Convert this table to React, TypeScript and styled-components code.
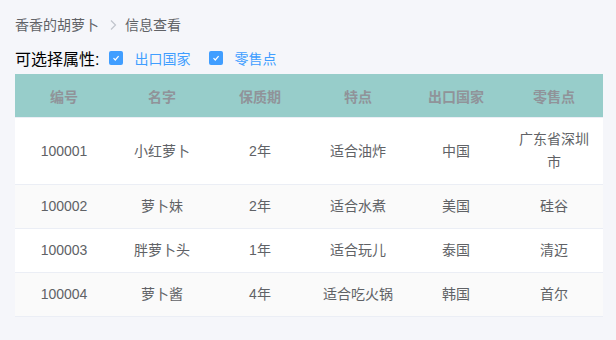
import { createGlobalStyle } from 'styled-components';
import styled from 'styled-components';

const GlobalStyle = createGlobalStyle`
  html, body {
    margin: 0;
    padding: 0;
    background: #f5f6fa;
    font-family: "Liberation Sans", "Noto Sans CJK SC", sans-serif;
  }
`;

const Page = styled.div`
  padding: 18px 13px 0 15px;
`;

const Breadcrumb = styled.div`
  display: flex;
  align-items: center;
  font-size: 14px;
  line-height: 14px;
  color: #606266;
`;

const Sep = styled.span`
  display: inline-flex;
  margin: 0 7px 0 9px;
  color: #c0c4cc;
`;

const FilterBar = styled.div`
  display: flex;
  align-items: center;
  height: 20px;
  margin: 16px 0 6px;
`;

const FilterLabel = styled.span`
  font-size: 16px;
  color: #000;
  margin-right: 10px;
`;

const CheckItem = styled.label`
  display: inline-flex;
  align-items: center;
  margin-right: 19px;
  font-size: 14px;
  color: #409eff;
  cursor: pointer;
`;

const Box = styled.span`
  width: 14px;
  height: 14px;
  border-radius: 2px;
  background: #409eff;
  display: inline-flex;
  align-items: center;
  justify-content: center;
  margin-right: 11px;
`;

const Table = styled.table`
  width: 588px;
  border-collapse: collapse;
  table-layout: fixed;
  font-size: 14px;
  text-align: center;
`;

const Th = styled.th`
  height: 43px;
  padding: 0 10px;
  background: #97cdca;
  color: #909399;
  font-weight: bold;
  border-bottom: 1px solid #ebeef5;
`;

const Tr = styled.tr<{ $striped: boolean }>`
  background: ${(p) => (p.$striped ? '#fafafa' : '#ffffff')};
`;

const Td = styled.td`
  padding: 10px 10px;
  line-height: 23px;
  color: #606266;
  border-bottom: 1px solid #ebeef5;
`;

const columns = ['编号', '名字', '保质期', '特点', '出口国家', '零售点'];

const rows = [
  ['100001', '小红萝卜', '2年', '适合油炸', '中国', '广东省深圳市'],
  ['100002', '萝卜妹', '2年', '适合水煮', '美国', '硅谷'],
  ['100003', '胖萝卜头', '1年', '适合玩儿', '泰国', '清迈'],
  ['100004', '萝卜酱', '4年', '适合吃火锅', '韩国', '首尔'],
];

function Check() {
  return (
    <Box>
      <svg width="10" height="10" viewBox="0 0 10 10">
        <path d="M2.5 5.2 L4.3 7 L7.6 3.2" fill="none" stroke="#fff" strokeWidth="1.2" />
      </svg>
    </Box>
  );
}

export default function App() {
  return (
    <>
      <GlobalStyle />
      <Page>
        <Breadcrumb>
          <span>香香的胡萝卜</span>
          <Sep>
            <svg width="10" height="12" viewBox="0 0 10 12">
              <path d="M3 1.5 L7.5 6 L3 10.5" fill="none" stroke="#c0c4cc" strokeWidth="1.2" />
            </svg>
          </Sep>
          <span>信息查看</span>
        </Breadcrumb>
        <FilterBar>
          <FilterLabel>可选择属性:</FilterLabel>
          <CheckItem>
            <Check />
            出口国家
          </CheckItem>
          <CheckItem>
            <Check />
            零售点
          </CheckItem>
        </FilterBar>
        <Table>
          <thead>
            <tr>
              {columns.map((c) => (
                <Th key={c}>{c}</Th>
              ))}
            </tr>
          </thead>
          <tbody>
            {rows.map((r, i) => (
              <Tr key={r[0]} $striped={i % 2 === 1}>
                {r.map((v, j) => (
                  <Td key={j}>{v}</Td>
                ))}
              </Tr>
            ))}
          </tbody>
        </Table>
      </Page>
    </>
  );
}
